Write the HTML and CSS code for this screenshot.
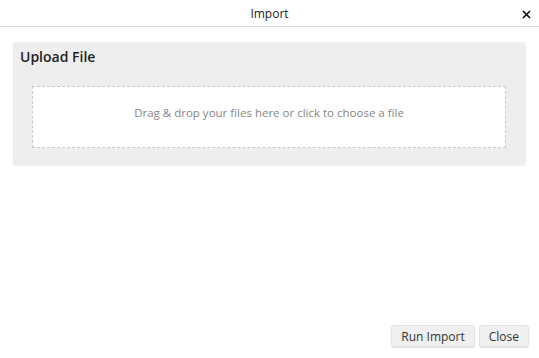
FILE: index.html
```html
<!DOCTYPE html>
<html>
<head>
<meta charset="utf-8">
<link rel="stylesheet" href="styles.css">
</head>
<body>
<div class="dialog">
  <header class="titlebar">
    <span class="title">Import</span>
    <button class="close-x" aria-label="Close">
      <svg width="9" height="9" viewBox="0 0 9 9"><path d="M1 1L8 8M8 1L1 8" stroke="#111" stroke-width="1.7" fill="none"/></svg>
    </button>
  </header>
  <main class="content">
    <section class="panel">
      <h2 class="panel-title">Upload File</h2>
      <div class="dropzone">Drag &amp; drop your files here or click to choose a file</div>
    </section>
  </main>
  <footer class="actions">
    <button class="btn">Run Import</button>
    <button class="btn">Close</button>
  </footer>
</div>
</body>
</html>
```
FILE: styles.css
```css
html, body {
  margin: 0;
  padding: 0;
  background: #fff;
  font-family: "Open Sans", "Liberation Sans", sans-serif;
  color: #333;
}
.dialog {
  height: 358px;
  display: flex;
  flex-direction: column;
}
.titlebar {
  height: 26px;
  border-bottom: 1px solid #dcdcdc;
  display: flex;
  align-items: center;
  justify-content: center;
  position: relative;
}
.title {
  font-size: 12px;
  color: #222;
}
.close-x {
  position: absolute;
  right: 7px;
  top: 8px;
  border: 0;
  background: none;
  padding: 0;
  width: 12px;
  height: 12px;
  display: flex;
  align-items: center;
  justify-content: center;
}
.content {
  flex: 1;
  padding: 15px 13px 0 13px;
}
.panel {
  background: #eeeeee;
  border-radius: 3px;
  padding: 5px 20px 18px 19px;
}
.panel-title {
  margin: 0 0 0 -12px;
  font-size: 14px;
  font-weight: 600;
  color: #222;
  line-height: 19px;
  height: 39px;
}
.dropzone {
  height: 60px;
  box-sizing: content-box;
  background: #fff;
  border: 1px dashed #c8c8c8;
  text-align: center;
  font-size: 11.5px;
  line-height: 16px;
  padding: 0;
  color: #868686;
}
.dropzone::before {
  content: "";
  display: block;
  height: 18px;
}
.actions {
  display: flex;
  justify-content: flex-end;
  gap: 4px;
  padding: 0 10px 11px 0;
}
.btn {
  font-family: inherit;
  font-size: 12px;
  color: #333;
  height: 22px;
  padding: 0 9px;
  background: #f0f0f0;
  border: 1px solid #e2e2e2;
  border-radius: 3px;
  box-shadow: 0 1px 1px rgba(0,0,0,0.12);
}
```
